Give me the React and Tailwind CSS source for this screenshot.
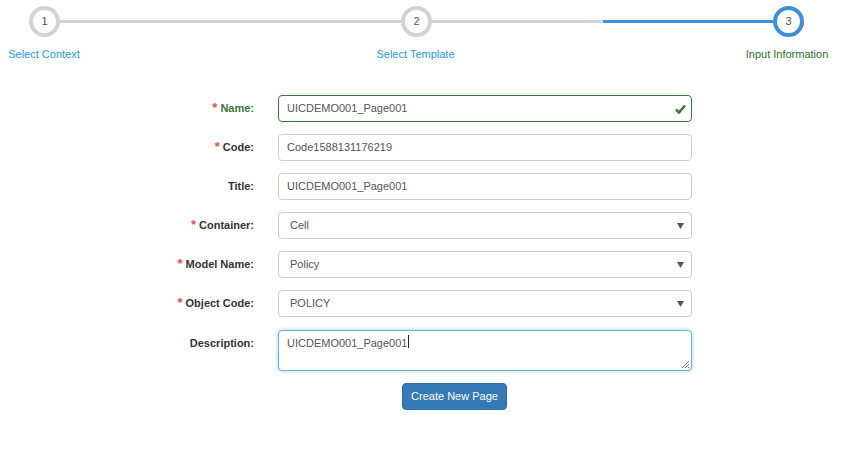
import React from "react";

function Circle({ n, active }) {
  return (
    <div
      className={
        "w-[31px] h-[31px] rounded-full border-[4px] flex items-center justify-center bg-white text-[11px] text-[#555] shrink-0 " +
        (active ? "border-[#3a8fde]" : "border-[#d0d4d7]")
      }
    >
      {n}
    </div>
  );
}

function Row({ label, required, success, children, alignTop }) {
  return (
    <div className={"flex gap-[24px] " + (alignTop ? "items-start" : "items-center")}>
      <div
        className={
          "w-[254px] flex justify-end items-center gap-[3px] font-bold text-[11px] " +
          (success ? "text-[#3c763d]" : "text-[#333]") +
          (alignTop ? " pt-[5px]" : "")
        }
      >
        {required && <span className="text-[#f04848] text-[13px] leading-none relative top-[-1px] font-bold">*</span>}
        <span>{label}</span>
      </div>
      {children}
    </div>
  );
}

function Select({ value }) {
  return (
    <div className="w-[414px] h-[27px] border border-[#ccc] rounded-[4px] bg-white flex items-center justify-between pl-[11px] pr-[6px] text-[11px] text-[#555]">
      <span>{value}</span>
      <svg width="8" height="6" viewBox="0 0 8 6">
        <path d="M0 0 H7 L3.5 6 Z" fill="#555" />
      </svg>
    </div>
  );
}

function Input({ value, success }) {
  return (
    <div
      className={
        "w-[414px] h-[27px] border rounded-[4px] bg-white flex items-center justify-between pl-[8px] pr-[5px] text-[11px] text-[#555] " +
        (success ? "border-[#3c763d]" : "border-[#ccc]")
      }
    >
      <span>{value}</span>
      {success && (
        <svg width="11" height="10" viewBox="0 0 11 10">
          <path d="M1 5.5 L4 8.5 L10 1.5" stroke="#3c763d" strokeWidth="2.6" fill="none" />
        </svg>
      )}
    </div>
  );
}

export default function App() {
  return (
    <div
      className="w-[841px] h-[465px] bg-white overflow-hidden"
      style={{ fontFamily: '"Liberation Sans", Arial, sans-serif' }}
    >
      <div className="flex items-center pl-[29px] pr-[37px] pt-[6px]">
        <Circle n="1" />
        <div className="flex-1 h-[3px] bg-[#d0d4d7]" />
        <Circle n="2" />
        <div className="flex-1 h-[3px] flex">
          <div className="flex-1 bg-[#d0d4d7]" />
          <div className="flex-1 bg-[#3a8fde]" />
        </div>
        <Circle n="3" active />
      </div>
      <div className="flex justify-between pr-[10px] mt-[10px] text-[11px] leading-[14px]">
        <div className="w-[88px] text-center whitespace-nowrap text-[#1e9be6]">Select Context</div>
        <div className="w-[88px] text-center whitespace-nowrap text-[#1e9be6]">Select Template</div>
        <div className="w-[88px] text-center whitespace-nowrap text-[#2f6f2f]">Input Information</div>
      </div>

      <div className="mt-[34px] flex flex-col gap-[12px]">
        <Row label="Name:" required success>
          <Input value="UICDEMO001_Page001" success />
        </Row>
        <Row label="Code:" required>
          <Input value="Code1588131176219" />
        </Row>
        <Row label="Title:">
          <Input value="UICDEMO001_Page001" />
        </Row>
        <Row label="Container:" required>
          <Select value="Cell" />
        </Row>
        <Row label="Model Name:" required>
          <Select value="Policy" />
        </Row>
        <Row label="Object Code:" required>
          <Select value="POLICY" />
        </Row>
        <div className="mt-[1px]">
          <Row label="Description:" alignTop>
            <div className="w-[414px] h-[41px] border border-[#66afe9] rounded-[4px] bg-white shadow-[0_0_4px_rgba(102,175,233,0.6)] relative pl-[8px] pt-[4px] text-[11px] text-[#555] flex items-start">
              <span>UICDEMO001_Page001</span>
              <span className="inline-block w-px h-[13px] bg-[#222] ml-[1px]" />
              <svg className="absolute right-[1px] bottom-[1px]" width="9" height="9" viewBox="0 0 9 9">
                <path d="M8 1 L1 8 M8 4 L4 8 M8 7 L7 8" stroke="#777" strokeWidth="1" />
              </svg>
            </div>
          </Row>
        </div>
        <div className="pl-[402px]">
          <button className="w-[105px] h-[27px] rounded-[4px] bg-[#337ab7] border border-[#2e6da4] text-white text-[11px]">
            Create New Page
          </button>
        </div>
      </div>
    </div>
  );
}
